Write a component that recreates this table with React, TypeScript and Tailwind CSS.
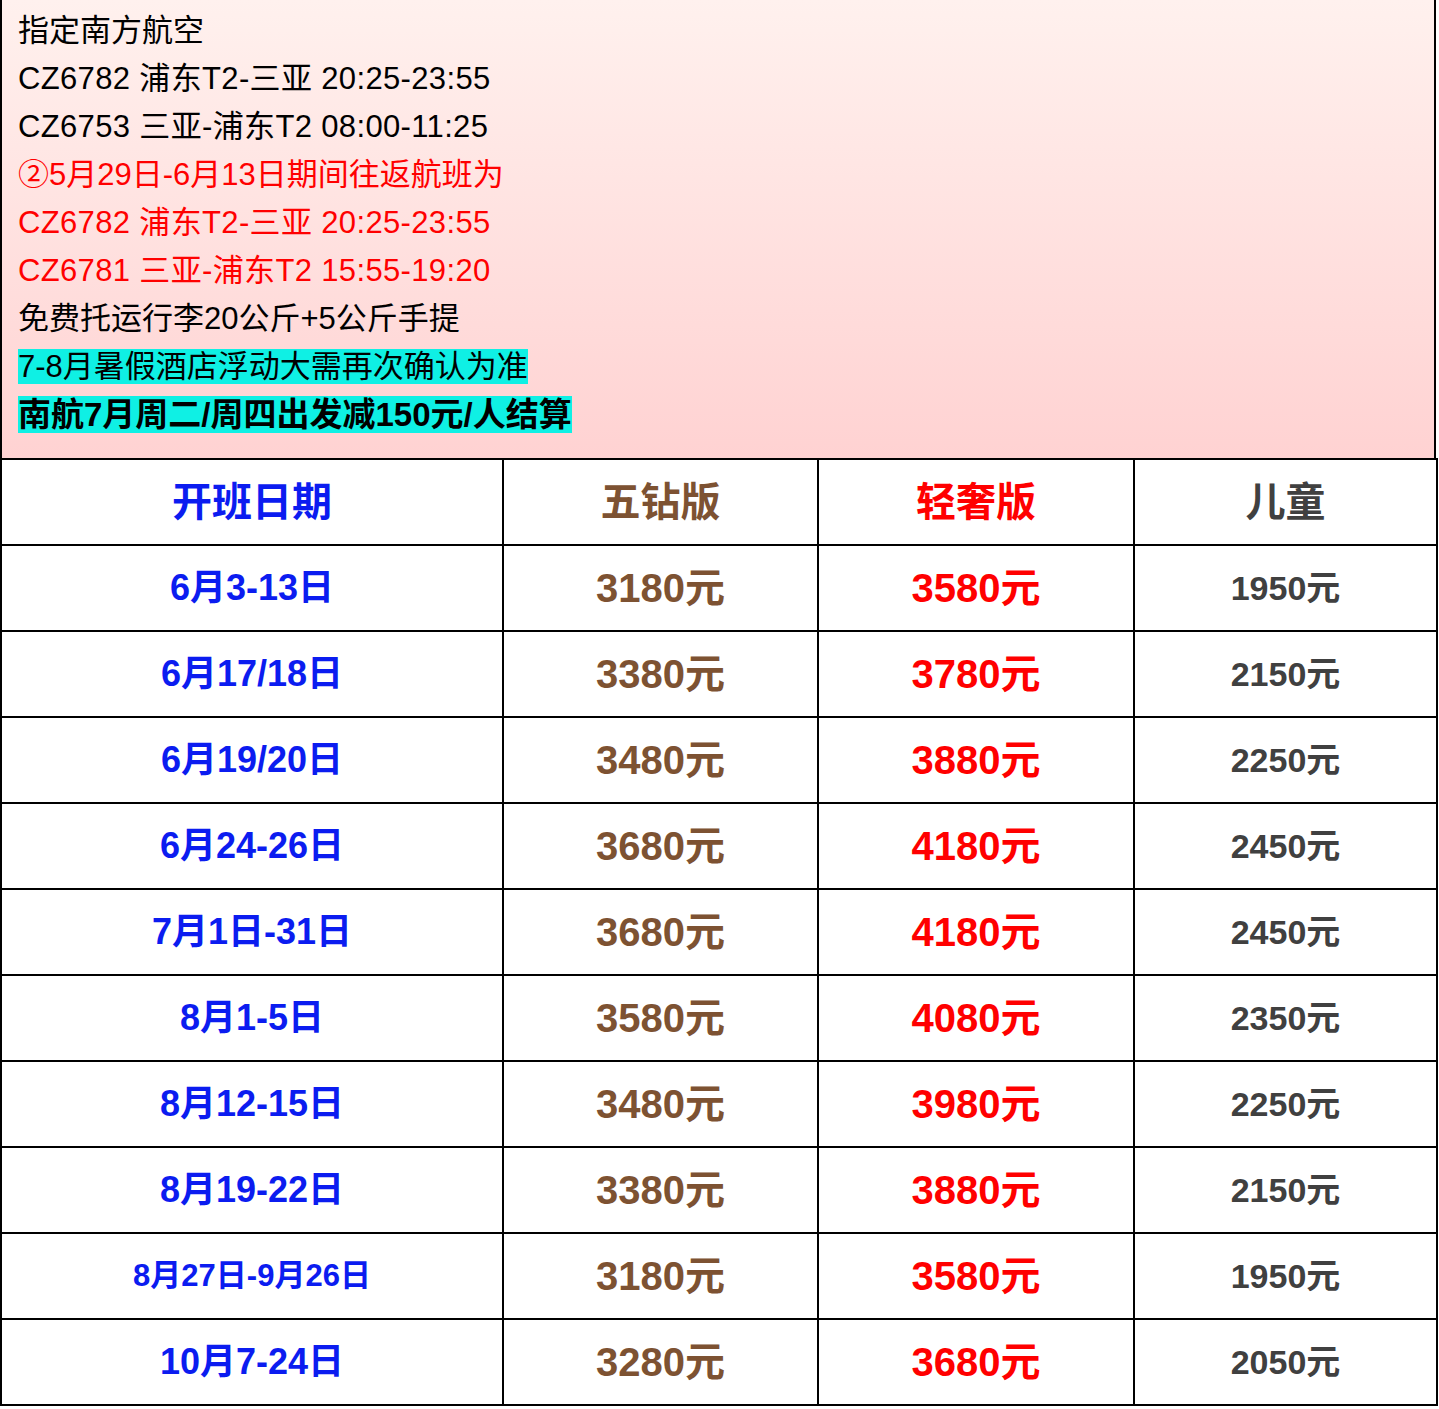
const rows = [
  { date: '6月3-13日', a: '3180元', b: '3580元', c: '1950元' },
  { date: '6月17/18日', a: '3380元', b: '3780元', c: '2150元' },
  { date: '6月19/20日', a: '3480元', b: '3880元', c: '2250元' },
  { date: '6月24-26日', a: '3680元', b: '4180元', c: '2450元' },
  { date: '7月1日-31日', a: '3680元', b: '4180元', c: '2450元' },
  { date: '8月1-5日', a: '3580元', b: '4080元', c: '2350元' },
  { date: '8月12-15日', a: '3480元', b: '3980元', c: '2250元' },
  { date: '8月19-22日', a: '3380元', b: '3880元', c: '2150元' },
  { date: '8月27日-9月26日', a: '3180元', b: '3580元', c: '1950元', small: true },
  { date: '10月7-24日', a: '3280元', b: '3680元', c: '2050元' },
];

const font = { fontFamily: '"Liberation Sans", Arial, "Noto Sans CJK SC", sans-serif' };

export default function App() {
  return (
    <div className="w-[1436px] bg-white" style={font}>
      <div className="border-x-2 border-black bg-gradient-to-b from-[#fff1ee] to-[#ffd2d2] px-4 pt-[7px] pb-[18px] text-[31px] leading-[48px] text-black">
        <div>指定南方航空</div>
        <div className="tracking-[0.35px]">CZ6782 浦东T2-三亚 20:25-23:55</div>
        <div className="tracking-[0.35px]">CZ6753 三亚-浦东T2 08:00-11:25</div>
        <div className="text-[#ff0000]">②5月29日-6月13日期间往返航班为</div>
        <div className="tracking-[0.35px] text-[#ff0000]">CZ6782 浦东T2-三亚 20:25-23:55</div>
        <div className="tracking-[0.35px] text-[#ff0000]">CZ6781 三亚-浦东T2 15:55-19:20</div>
        <div>免费托运行李20公斤+5公斤手提</div>
        <div>
          <span className="bg-[#0ff0e4]">7-8月暑假酒店浮动大需再次确认为准</span>
        </div>
        <div>
          <span className="bg-[#0ff0e4] text-[33px] font-bold">南航7月周二/周四出发减150元/人结算</span>
        </div>
      </div>
      <table className="w-[1436px] table-fixed border-collapse">
        <colgroup>
          <col className="w-[502px]" />
          <col className="w-[315px]" />
          <col className="w-[316px]" />
          <col className="w-[303px]" />
        </colgroup>
        <thead>
          <tr className="h-[86px]">
            <th className="border-2 border-black text-[40px] font-bold text-[#0b1cf0]">开班日期</th>
            <th className="border-2 border-black text-[40px] font-bold text-[#7d5232]">五钻版</th>
            <th className="border-2 border-black text-[40px] font-bold text-[#ff0000]">轻奢版</th>
            <th className="border-2 border-black text-[40px] font-bold text-[#404040]">儿童</th>
          </tr>
        </thead>
        <tbody>
          {rows.map((r) => (
            <tr key={r.date} className="h-[86px]">
              <td
                className={
                  r.small
                    ? 'border-2 border-black text-center text-[31px] font-bold text-[#0b1cf0]'
                    : 'border-2 border-black text-center text-[36px] font-bold text-[#0b1cf0]'
                }
              >
                {r.date}
              </td>
              <td className="border-2 border-black text-center text-[40px] font-bold text-[#7d5232]">{r.a}</td>
              <td className="border-2 border-black text-center text-[40px] font-bold text-[#ff0000]">{r.b}</td>
              <td className="border-2 border-black text-center text-[34px] font-bold text-[#404040]">{r.c}</td>
            </tr>
          ))}
        </tbody>
      </table>
    </div>
  );
}
